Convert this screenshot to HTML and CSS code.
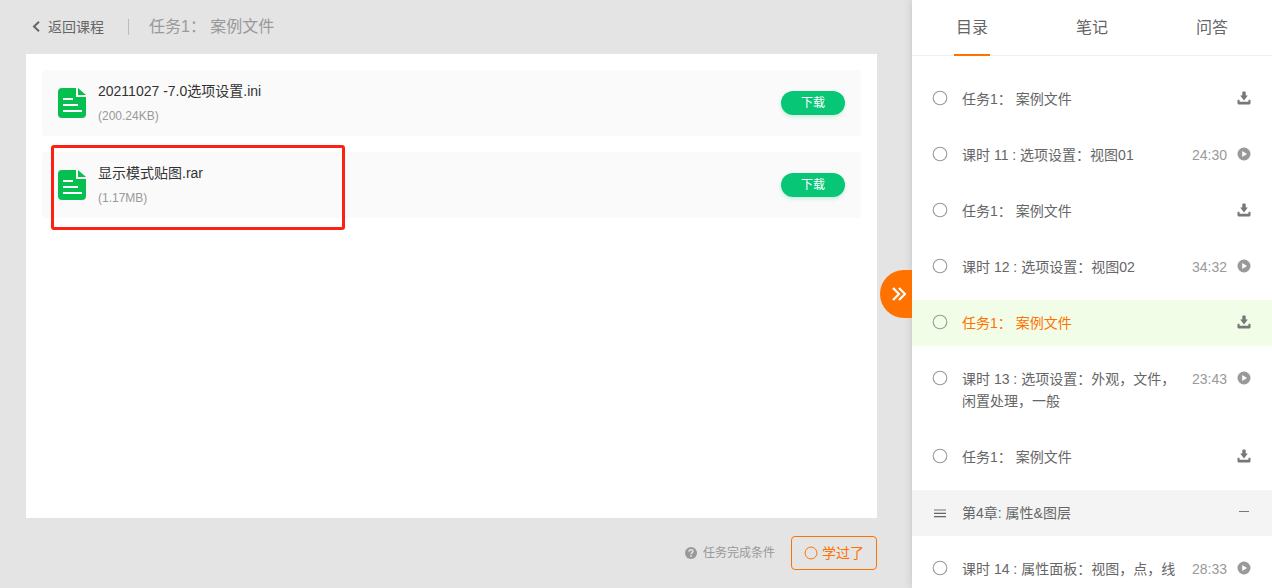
FILE: index.html
```html
<!DOCTYPE html>
<html lang="zh-CN">
<head>
<meta charset="utf-8">
<title>任务1： 案例文件</title>
<link rel="stylesheet" href="styles.css">
</head>
<body>
<svg class="sprite" aria-hidden="true">
  <symbol id="i-file" viewBox="0 0 28 30">
    <path fill="#05c04f" d="M4 0h14v9h10v17a4 4 0 0 1-4 4H4a4 4 0 0 1-4-4V4a4 4 0 0 1 4-4z"/>
    <path fill="#05c04f" d="M20 0l8 7h-8z"/>
    <path fill="#fff" d="M5 10h10v2H5zM5 16h15v2H5zM5 22h19v2H5z"/>
  </symbol>
  <symbol id="i-ring" viewBox="0 0 16 16"><circle cx="8" cy="8" r="6.8" fill="none" stroke="currentColor" stroke-width="1.1"/></symbol>
  <symbol id="i-download" viewBox="0 0 14 14">
    <path fill="currentColor" d="M5.300 1.500q0-1 1-1h1.400q1 0 1 1V4.500h2.100L7 9.400 3.200 4.500h2.100zM.5 9.300q0-.6.6-.6h.9q.6 0 .6.6v1.500h8.800V9.300q0-.6.6-.6h.9q.6 0 .6.6v3q0 1.100-1.100 1.100H1.600q-1.100 0-1.100-1.100z"/>
  </symbol>
  <symbol id="i-play" viewBox="0 0 14 14">
    <path fill="currentColor" fill-rule="evenodd" d="M7 .5a6.5 6.5 0 1 1 0 13a6.500 6.500 0 0 1 0-13zM5.200 4v6L10 7z"/>
  </symbol>
</svg>
<div class="app">
  <main class="main">
    <header class="topbar">
      <a class="back" href="#"><svg class="back-icon" viewBox="0 0 8 12" aria-hidden="true"><path d="M7 .8L2 5.500l5 4.700" fill="none" stroke="currentColor" stroke-width="2"/></svg>返回课程</a>
      <h1 class="title">任务1： 案例文件</h1>
    </header>
    <section class="panel">
      <ul class="files">
        <li class="file">
          <svg class="file-icon" aria-hidden="true"><use href="#i-file"/></svg>
          <div class="file-info"><div class="file-name">20211027 -7.0选项设置.ini</div><div class="file-size">(200.24KB)</div></div>
          <button class="download" type="button">下载</button>
        </li>
        <li class="file">
          <svg class="file-icon" aria-hidden="true"><use href="#i-file"/></svg>
          <div class="file-info"><div class="file-name">显示模式贴图.rar</div><div class="file-size">(1.17MB)</div></div>
          <button class="download" type="button">下载</button>
          <span class="highlight"></span>
        </li>
      </ul>
    </section>
    <footer class="actions">
      <span class="condition"><svg class="help-icon" viewBox="0 0 12 12" aria-hidden="true"><circle cx="6" cy="6" r="6" fill="currentColor"/><path d="M4.100 4.700C4.200 2 8 2.200 7.900 4.400C7.800 5.600 6.100 5.600 6.100 7.200" fill="none" stroke="#e4e4e4" stroke-width="1.500"/><path d="M5.300 8.200h1.600v1.500H5.300z" fill="#e4e4e4"/></svg>任务完成条件</span>
      <button class="learned" type="button"><svg class="learned-icon" aria-hidden="true"><use href="#i-ring"/></svg>学过了</button>
    </footer>
    <button class="toggle" type="button" aria-label="收起"><svg class="toggle-icon" viewBox="0 0 14 14" aria-hidden="true"><path d="M1 1l6 6-6 6M7 1l6 6-6 6" fill="none" stroke="currentColor" stroke-width="2.200"/></svg></button>
  </main>
  <aside class="sidebar">
    <nav class="tabs">
      <button class="tab active" type="button">目录</button>
      <button class="tab" type="button">笔记</button>
      <button class="tab" type="button">问答</button>
    </nav>
    <ul class="lessons">
      <li><a class="lesson" href="#"><svg class="ring" aria-hidden="true"><use href="#i-ring"/></svg><span class="name">任务1： 案例文件</span><svg class="state dark" aria-hidden="true"><use href="#i-download"/></svg></a></li>
      <li><a class="lesson" href="#"><svg class="ring" aria-hidden="true"><use href="#i-ring"/></svg><span class="name">课时 11 : 选项设置：视图01</span><span class="time">24:30</span><svg class="state" aria-hidden="true"><use href="#i-play"/></svg></a></li>
      <li><a class="lesson" href="#"><svg class="ring" aria-hidden="true"><use href="#i-ring"/></svg><span class="name">任务1： 案例文件</span><svg class="state dark" aria-hidden="true"><use href="#i-download"/></svg></a></li>
      <li><a class="lesson" href="#"><svg class="ring" aria-hidden="true"><use href="#i-ring"/></svg><span class="name">课时 12 : 选项设置：视图02</span><span class="time">34:32</span><svg class="state" aria-hidden="true"><use href="#i-play"/></svg></a></li>
      <li><a class="lesson current" href="#"><svg class="ring" aria-hidden="true"><use href="#i-ring"/></svg><span class="name">任务1： 案例文件</span><svg class="state dark" aria-hidden="true"><use href="#i-download"/></svg></a></li>
      <li><a class="lesson" href="#"><svg class="ring" aria-hidden="true"><use href="#i-ring"/></svg><span class="name">课时 13 : 选项设置：外观，文件，闲置处理，一般</span><span class="time">23:43</span><svg class="state" aria-hidden="true"><use href="#i-play"/></svg></a></li>
      <li><a class="lesson" href="#"><svg class="ring" aria-hidden="true"><use href="#i-ring"/></svg><span class="name">任务1： 案例文件</span><svg class="state dark" aria-hidden="true"><use href="#i-download"/></svg></a></li>
      <li><button class="lesson chapter" type="button"><svg class="ring" viewBox="0 0 16 16" aria-hidden="true"><path d="M2 5h12v2H2z" fill="#b4b4b4"/><path d="M2 9h12v1H2zM2 12h12v1H2z" fill="#666"/><path d="M2 8h12v1H2zM2 13h12v1H2z" fill="#ccc"/></svg><span class="name">第4章: 属性&amp;图层</span><svg class="state dark" viewBox="0 0 14 14" aria-hidden="true"><path d="M2 6h10v1H2z" fill="currentColor"/></svg></button></li>
      <li><a class="lesson" href="#"><svg class="ring" aria-hidden="true"><use href="#i-ring"/></svg><span class="name">课时 14 : 属性面板：视图，点，线</span><span class="time">28:33</span><svg class="state" aria-hidden="true"><use href="#i-play"/></svg></a></li>
    </ul>
  </aside>
</div>
</body>
</html>
```
FILE: styles.css
```css
* { box-sizing: border-box; }
body {
  margin: 0;
  font-family: "Liberation Sans", "Noto Sans CJK SC", sans-serif;
  font-size: 14px;
  line-height: 22px;
  color: #666;
  background: #e4e4e4;
}
button { font: inherit; color: inherit; border: 0; background: none; padding: 0; cursor: pointer; }
a { color: inherit; text-decoration: none; }
ul { list-style: none; margin: 0; padding: 0; }
svg { flex: none; }
.sprite { display: none; }

.app { display: flex; height: 100vh; overflow: hidden; }
.main {
  position: relative;
  flex: 1;
  min-width: 0;
  display: flex;
  flex-direction: column;
  padding: 0 35px 0 26px;
}

.topbar { display: flex; align-items: center; height: 54px; flex: none; }
.back { display: flex; align-items: center; gap: 8px; padding-left: 6px; }
.back-icon { width: 8px; height: 12px; }
.title {
  margin: 0 0 0 24px;
  padding-left: 20px;
  border-left: 1px solid #bbb;
  font-size: 16px;
  font-weight: 400;
  line-height: 16px;
  color: #999;
}

.panel { flex: 1; min-height: 0; padding: 16px; background: #fff; }
.files { display: flex; flex-direction: column; gap: 16px; }
.file {
  position: relative;
  display: flex;
  align-items: center;
  gap: 12px;
  height: 66px;
  padding: 0 16px;
  border-radius: 4px;
  background: #fafafa;
}
.file-icon { width: 28px; height: 30px; }
.file-info { flex: 1; min-width: 0; }
.file-name { line-height: 26px; color: #333; }
.file-size { font-size: 12px; line-height: 24px; color: #999; }
.download {
  width: 64px;
  height: 24px;
  border-radius: 12px;
  background: #07c777;
  box-shadow: 0 2px 4px rgba(7, 199, 119, 0.2);
  color: #fff;
  font-size: 12px;
  line-height: 24px;
}
.highlight {
  position: absolute;
  left: 9px;
  top: -7px;
  width: 294px;
  height: 85px;
  border: 3px solid #fe2012;
  border-radius: 3px;
}

.actions {
  display: flex;
  flex: none;
  align-items: center;
  justify-content: flex-end;
  gap: 16px;
  height: 70px;
}
.condition { display: flex; align-items: center; gap: 6px; font-size: 12px; color: #999; }
.help-icon { width: 12px; height: 12px; }
.learned {
  display: flex;
  align-items: center;
  justify-content: center;
  gap: 4px;
  width: 86px;
  height: 34px;
  border: 1px solid #ff7200;
  border-radius: 4px;
  color: #ff7200;
}
.learned-icon { width: 14px; height: 14px; }
.toggle {
  position: absolute;
  right: 0;
  top: 50%;
  width: 32px;
  height: 48px;
  margin-top: -24px;
  padding-left: 6px;
  border-radius: 24px 0 0 24px;
  background: #ff7200;
  color: #fff;
  z-index: 2;
}
.toggle-icon { display: block; width: 14px; height: 14px; margin: 0 auto; }

.sidebar {
  flex: none;
  width: 360px;
  background: #fff;
  box-shadow: 0 0 8px rgba(0, 0, 0, 0.15);
  overflow-y: clip;
}
.tabs { display: flex; height: 56px; border-bottom: 1px solid #f0f0f0; }
.tab { position: relative; flex: 1; font-size: 16px; }
.tab.active::after {
  content: "";
  position: absolute;
  left: 50%;
  bottom: -1px;
  width: 36px;
  height: 2px;
  margin-left: -18px;
  background: #ff7200;
}
.lessons { display: flex; flex-direction: column; gap: 10px; padding-top: 20px; }
.lesson { display: flex; width: 100%; padding: 12px 21px 12px 20px; text-align: left; }
.ring { width: 16px; height: 16px; margin: 2px 14px 0 0; color: #999; }
.name { flex: 1; min-width: 0; }
.time { margin-left: 12px; color: #999; }
.state { width: 14px; height: 14px; margin: 3px 0 0 10px; color: #999; }
.state.dark { color: #777; }
.current { background: #f1fde6; }
.current .name { color: #ff7200; }
.chapter { background: #f4f4f4; }
```
